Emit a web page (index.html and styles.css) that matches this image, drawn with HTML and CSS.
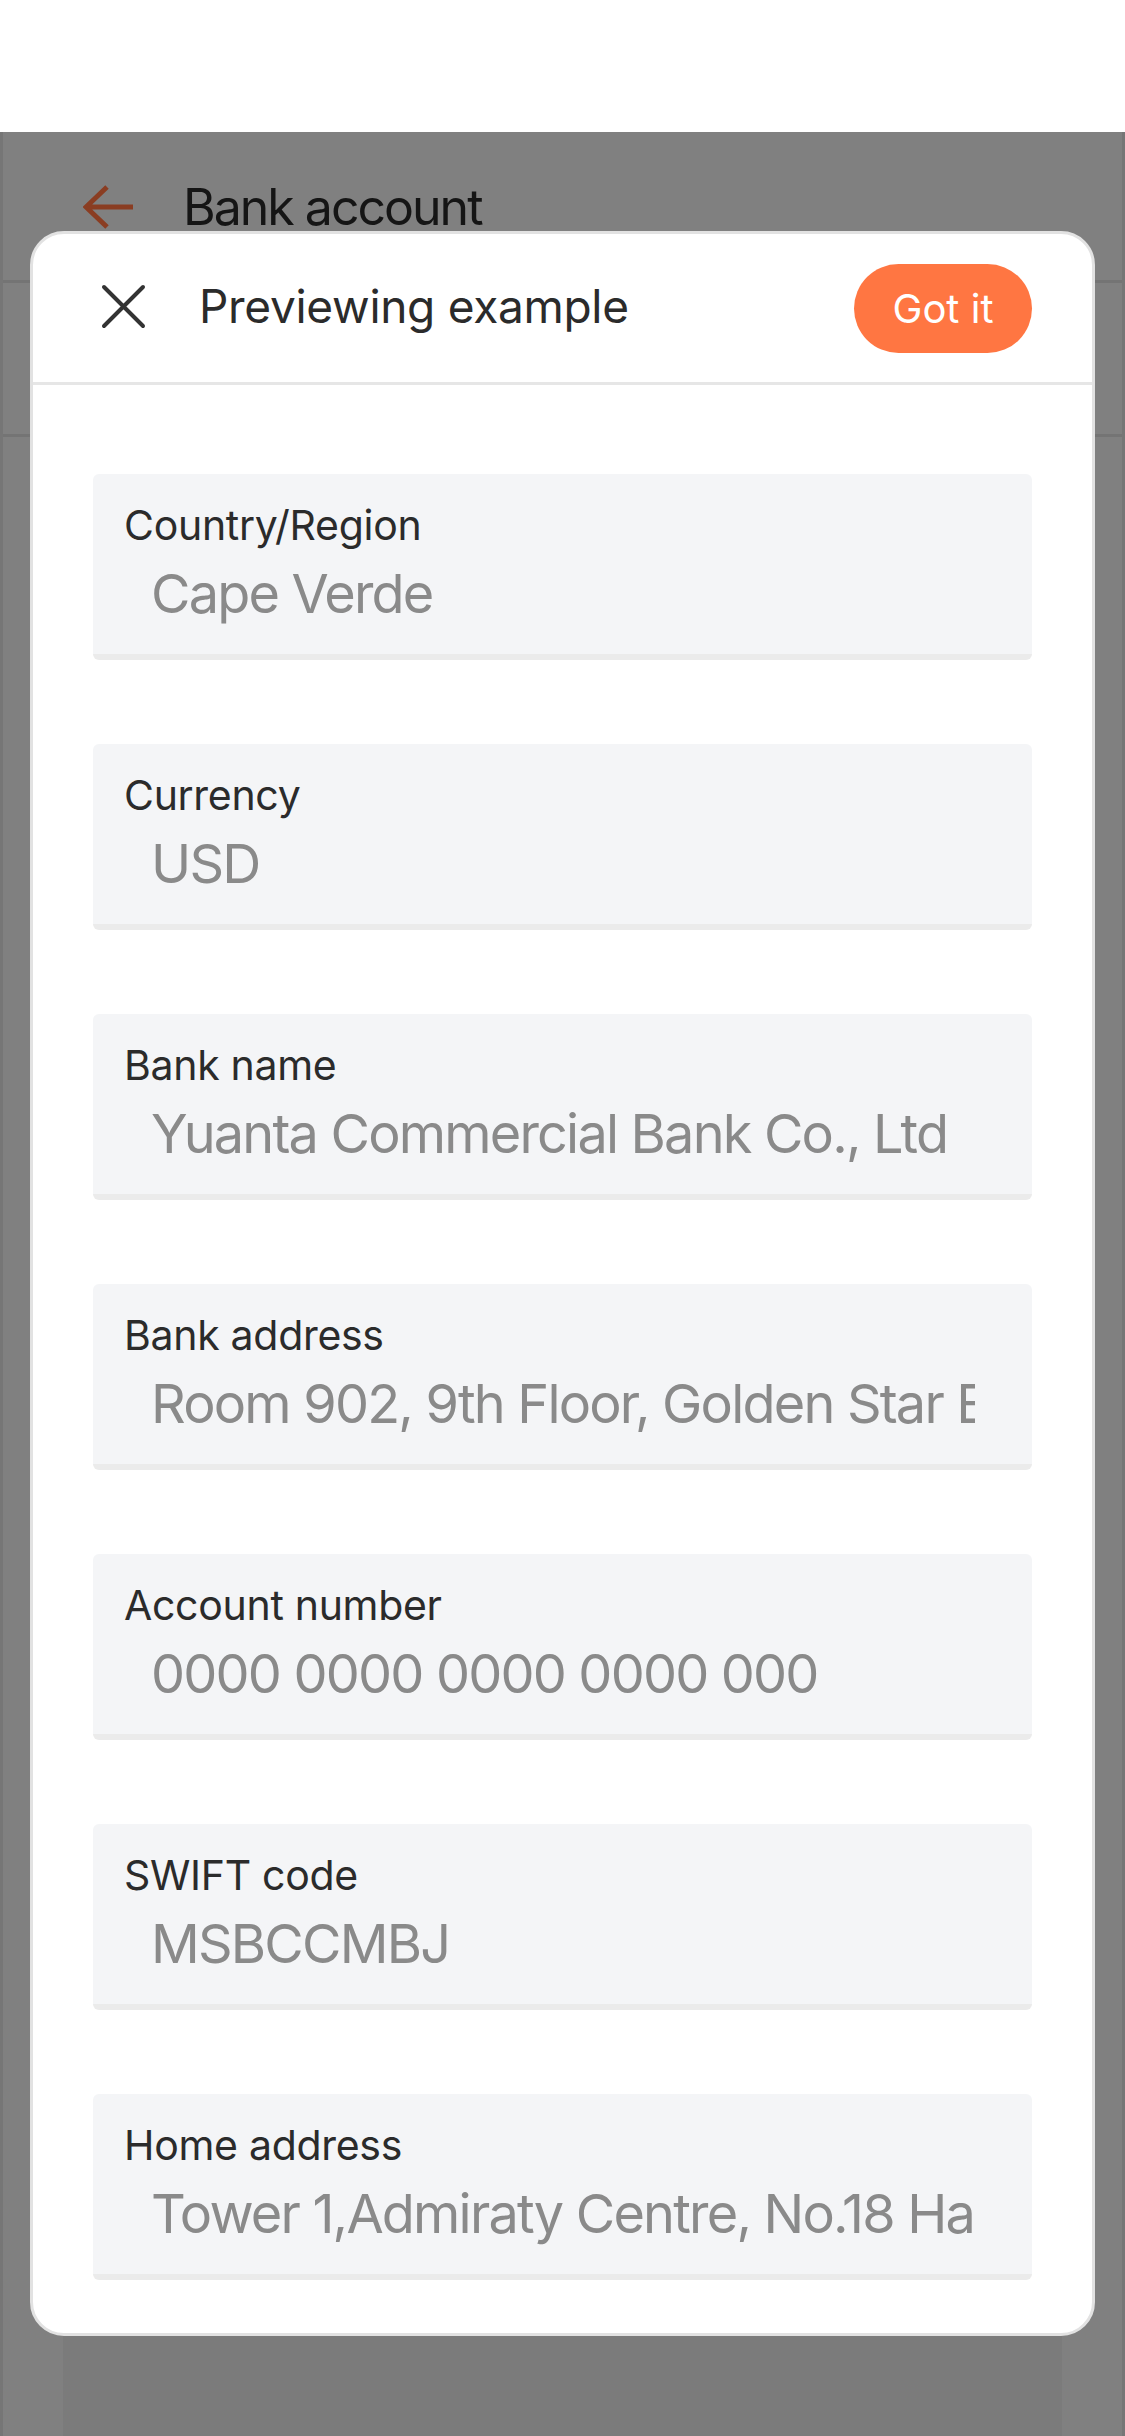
FILE: index.html
```html
<!DOCTYPE html>
<html lang="en">
<head>
<meta charset="utf-8">
<title>Bank account - Previewing example</title>
<link rel="stylesheet" href="styles.css">
</head>
<body>
<div class="screen">
  <div class="statusbar"></div>
  <div class="page">
    <div class="nav">
      <svg class="back" width="51" height="44" viewBox="0 0 51 44">
        <path d="M3 22 H50 M24 2 L3 22 L24 42" fill="none" stroke="#8a3d22" stroke-width="5" stroke-linejoin="miter"/>
      </svg>
      <span class="nav-title">Bank account</span>
    </div>
    <div class="section"></div>
    <div class="card"></div>
  </div>

  <div class="modal">
    <div class="modal-header">
      <svg class="close" width="45" height="45" viewBox="0 0 45 45">
        <path d="M3 3 L42 42 M42 3 L3 42" fill="none" stroke="#333" stroke-width="4" stroke-linecap="round"/>
      </svg>
      <span class="modal-title">Previewing example</span>
      <button class="got-it">Got it</button>
    </div>
    <div class="modal-body">
      <div class="field">
        <div class="label">Country/Region</div>
        <div class="value">Cape Verde</div>
      </div>
      <div class="field">
        <div class="label">Currency</div>
        <div class="value">USD</div>
      </div>
      <div class="field">
        <div class="label">Bank name</div>
        <div class="value">Yuanta Commercial Bank Co., Ltd</div>
      </div>
      <div class="field">
        <div class="label">Bank address</div>
        <div class="value">Room 902, 9th Floor, Golden Star Building</div>
      </div>
      <div class="field">
        <div class="label">Account number</div>
        <div class="value">0000 0000 0000 0000 000</div>
      </div>
      <div class="field">
        <div class="label">SWIFT code</div>
        <div class="value">MSBCCMBJ</div>
      </div>
      <div class="field">
        <div class="label">Home address</div>
        <div class="value">Tower 1,Admiraty Centre, No.18 Harcourt Road</div>
      </div>
    </div>
  </div>
</div>
</body>
</html>
```

FILE: styles.css
```css
* { box-sizing: border-box; }
html, body {
  margin: 0;
  padding: 0;
  background: #ffffff;
}
body {
  font-family: Inter, "Noto Sans", "Liberation Sans", sans-serif;
  width: 1125px;
  height: 2436px;
  overflow: hidden;
}
.screen {
  position: relative;
  width: 1125px;
  height: 2436px;
  display: flex;
  flex-direction: column;
}
.statusbar {
  height: 132px;
  background: #ffffff;
  flex: none;
}
.page {
  flex: 1;
  background: #808080;
  border-left: 3px solid #767676;
  border-right: 3px solid #767676;
  display: flex;
  flex-direction: column;
}
.nav {
  height: 151px;
  border-bottom: 3px solid #747474;
  display: flex;
  align-items: flex-start;
  padding: 52px 0 0 80px;
  flex: none;
}
.back {
  margin-top: 1px;
  flex: none;
}
.nav-title {
  margin-left: 49px;
  font-size: 50px;
  line-height: 46px;
  color: #151515;
  letter-spacing: -2px;
}
.section {
  height: 154px;
  border-bottom: 3px solid #747474;
  flex: none;
}
.card {
  flex: 1;
  margin: 60px 60px 0 60px;
  background: #7b7b7b;
}

.modal {
  position: absolute;
  left: 30px;
  top: 231px;
  width: 1065px;
  height: 2105px;
  background: #ffffff;
  border: 3px solid #e2e2e2;
  border-radius: 34px;
  overflow: hidden;
  display: flex;
  flex-direction: column;
}
.modal-header {
  height: 151px;
  border-bottom: 3px solid #e6e6e6;
  display: flex;
  align-items: center;
  padding: 0 60px 0 68px;
  flex: none;
}
.close {
  flex: none;
  margin-top: -4px;
}
.modal-title {
  margin-left: 53px;
  font-size: 46px;
  color: #2b2b2b;
  letter-spacing: -0.3px;
  flex: 1;
  margin-top: -4px;
}
.got-it {
  flex: none;
  width: 178px;
  height: 89px;
  border: none;
  border-radius: 45px;
  background: #ff7642;
  color: #ffffff;
  font-family: Inter, "Noto Sans", "Liberation Sans", sans-serif;
  font-size: 40px;
  padding: 0;
  margin-top: 0;
}
.modal-body {
  padding: 89px 60px 0 60px;
  display: flex;
  flex-direction: column;
  gap: 84px;
}
.field {
  background: #f4f5f7;
  border-bottom: 6px solid #ebebeb;
  border-radius: 6px;
  padding: 26px 57px 28px 31px;
  display: flex;
  flex-direction: column;
  gap: 12px;
}
.label {
  font-size: 41px;
  line-height: 50px;
  color: #2b2b2b;
  letter-spacing: -0.3px;
  white-space: nowrap;
}
.value {
  margin-left: 27px;
  font-size: 54px;
  line-height: 64px;
  color: #8a8a8a;
  letter-spacing: -1.8px;
  white-space: nowrap;
  overflow: hidden;
  text-overflow: clip;
}
```
